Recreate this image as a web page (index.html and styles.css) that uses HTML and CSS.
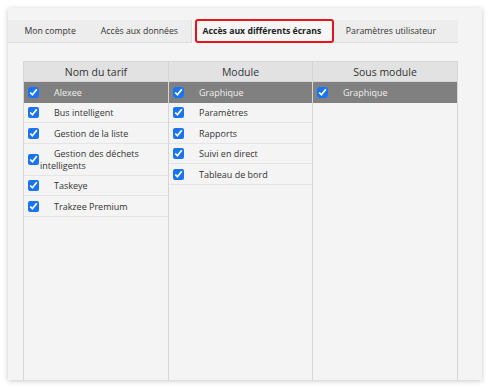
FILE: index.html
```html
<!DOCTYPE html>
<html lang="fr">
<head>
<meta charset="utf-8">
<title>Accès aux différents écrans</title>
<link rel="stylesheet" href="styles.css">
</head>
<body>
<div class="card">
  <div class="tabs">
    <div class="tab">Mon compte</div>
    <div class="tab">Accès aux données</div>
    <div class="tab active"><span class="highlight"></span>Accès aux différents écrans</div>
    <div class="tab">Paramètres utilisateur</div>
  </div>
  <div class="table">
    <div class="col">
      <div class="head">Nom du tarif</div>
      <div class="row selected"><input type="checkbox" checked><span class="label">Alexee</span></div>
      <div class="row"><input type="checkbox" checked><span class="label">Bus intelligent</span></div>
      <div class="row"><input type="checkbox" checked><span class="label">Gestion de la liste</span></div>
      <div class="row"><input type="checkbox" checked><span class="label">Gestion des déchets intelligents</span></div>
      <div class="row"><input type="checkbox" checked><span class="label">Taskeye</span></div>
      <div class="row"><input type="checkbox" checked><span class="label">Trakzee Premium</span></div>
    </div>
    <div class="col">
      <div class="head">Module</div>
      <div class="row selected"><input type="checkbox" checked><span class="label">Graphique</span></div>
      <div class="row"><input type="checkbox" checked><span class="label">Paramètres</span></div>
      <div class="row"><input type="checkbox" checked><span class="label">Rapports</span></div>
      <div class="row"><input type="checkbox" checked><span class="label">Suivi en direct</span></div>
      <div class="row"><input type="checkbox" checked><span class="label">Tableau de bord</span></div>
    </div>
    <div class="col">
      <div class="head">Sous module</div>
      <div class="row selected"><input type="checkbox" checked><span class="label">Graphique</span></div>
    </div>
  </div>
</div>
</body>
</html>
```
FILE: styles.css
```css
html, body {
  margin: 0;
  padding: 0;
  background: #ffffff;
}
body {
  padding: 8px;
  font-family: "Open Sans", "Liberation Sans", sans-serif;
  color: #333;
}
.card {
  width: 474px;
  height: 372px;
  box-sizing: border-box;
  background: #f4f4f4;
  box-shadow: 0 1px 5px rgba(0, 0, 0, 0.22);
  padding: 12px 24px 0 0;
  overflow: hidden;
  display: flex;
  flex-direction: column;
}
.tabs {
  display: flex;
  height: 22px;
  background: #ededed;
  border-bottom: 1px solid #dedede;
  padding-left: 4px;
}
.tab {
  position: relative;
  padding: 0 12.5px;
  font-size: 8.7px;
  line-height: 22px;
  color: #333;
  white-space: nowrap;
}
.tab.active {
  background: #f6f6f6;
  font-weight: bold;
  color: #222;
  height: 23px;
  border-left: 1px solid #dedede;
  padding: 0 12px 0 11px;
}
.highlight {
  position: absolute;
  left: 3px;
  top: -1px;
  right: -1px;
  height: 24px;
  box-sizing: border-box;
  border: 2px solid #e8141b;
  border-radius: 3px;
}
.table {
  margin: 18px 0 0 15px;
  flex: 1;
  display: grid;
  grid-template-columns: 144px 144px 145px;
  border-left: 1px solid #d6d6d6;
  border-right: 1px solid #d6d6d6;
  align-self: flex-start;
}
.col {
  border-left: 1px solid #d6d6d6;
  display: flex;
  flex-direction: column;
}
.col:first-child {
  border-left: none;
}
.head {
  height: 21px;
  line-height: 21px;
  background: #e2e2e2;
  border-top: 1px solid #d6d6d6;
  border-bottom: 1px solid #d6d6d6;
  box-sizing: border-box;
  text-align: center;
  font-size: 10.5px;
  color: #333;
}
.row {
  display: flex;
  align-items: center;
  padding: 4.5px 4px 3.5px 3px;
  border-bottom: 1px solid #e4e4e4;
  font-size: 9px;
  line-height: 11.5px;
  color: #333;
}
.row input {
  width: 11px;
  height: 11px;
  margin: 0 1px 0 1px;
  flex: none;
  accent-color: #1a74f2;
}
.label {
  text-indent: 14px;
}
.row.selected {
  background: #808080;
  color: #efefef;
  border-bottom-color: #808080;
}
```
